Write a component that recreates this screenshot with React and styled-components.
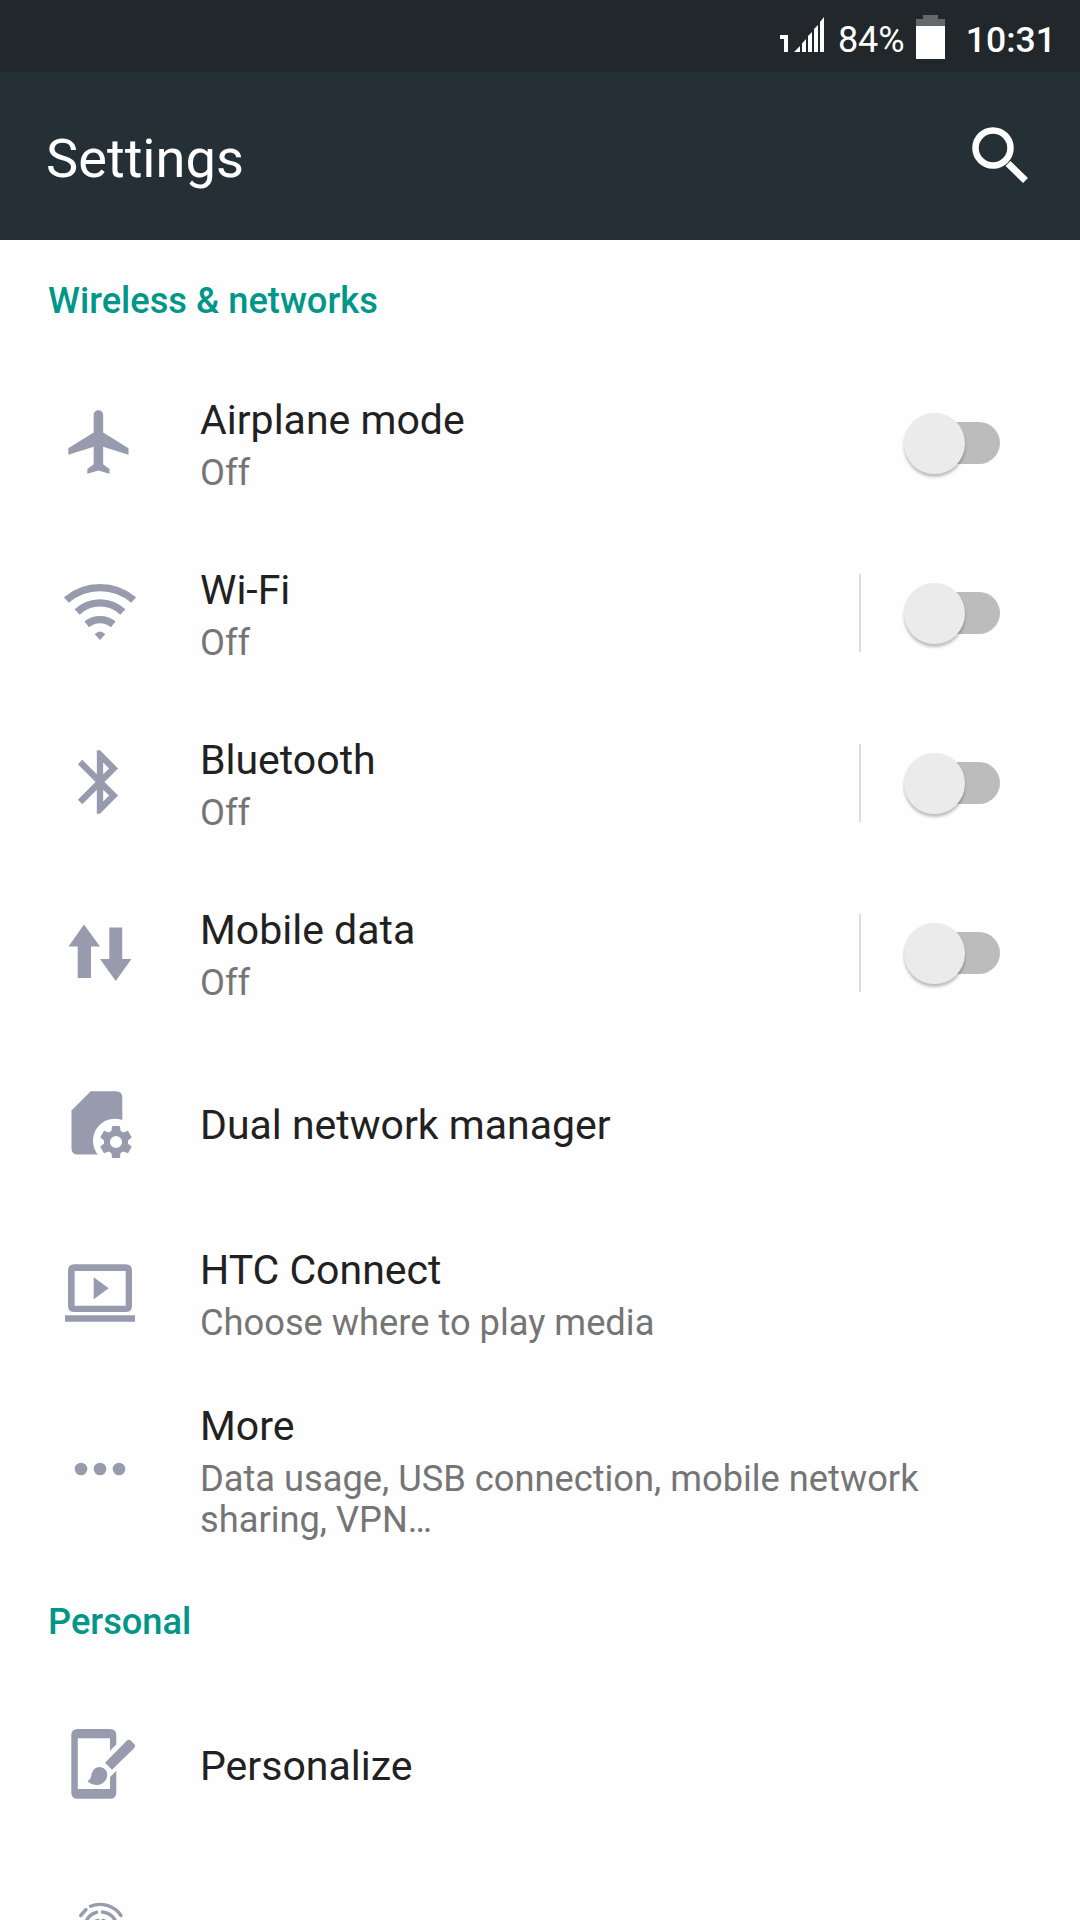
import React from 'react'
import styled, { createGlobalStyle } from 'styled-components'

const GlobalStyle = createGlobalStyle`
* {
  box-sizing: border-box;
}
body {
  margin: 0;
  background: #fefefe;
  font-family: Roboto, sans-serif;
}
`
const Screen = styled.div`
width: 1080px;
height: 1920px;
overflow: hidden;
background: #fefefe;
`
const StatusBar = styled.div`
height: 72px;
display: flex;
align-items: center;
justify-content: flex-end;
padding: 6px 24px 0 0;
background: #22272b;
color: #fff;
`
const Signal = styled.svg`
width: 44px;
height: 36px;
margin: 0 14px 8px 0;
`
const Percent = styled.span`
padding-top: 2px;
font-size: 36px;
line-height: 42px;
`
const Battery = styled.svg`
width: 29px;
height: 44px;
margin: 0 21px 4px 11px;
`
const Clock = styled.span`
padding-top: 2px;
font-size: 35.6px;
font-weight: 500;
line-height: 42px;
`
const Header = styled.header`
height: 168px;
display: flex;
align-items: center;
justify-content: space-between;
padding: 2px 51px 0 46px;
background: #253036;
`
const Title = styled.h1`
margin: 0;
padding-top: 3px;
font-size: 54.2px;
font-weight: 400;
color: #fff;
`
const SearchIcon = styled.svg`
width: 57px;
height: 57px;
margin-bottom: 4px;
`
const SectionTitle = styled.h2`
height: 118px;
margin: 0;
padding: 40px 48px 0;
font-size: 36.25px;
font-weight: 500;
line-height: 42px;
color: #009688;
`
const Row = styled.div`
height: ${({ $tall }) => ($tall ? 183 : 170)}px;
display: flex;
align-items: center;
padding: 0 80px 0 62px;
`
const RowIcon = styled.svg`
width: 76px;
height: 76px;
flex: none;
margin: 0 62px 2px 0;
fill: #979bad;
`
const Labels = styled.div`
flex: 1;
min-width: 0;
padding-top: 3px;
`
const Label = styled.div`
font-size: 41px;
line-height: 50px;
color: #212121;
`
const Summary = styled.div`
padding: 7px 0 2px;
font-size: 36.25px;
line-height: 41px;
color: #757575;
`
const Divider = styled.div`
width: 2px;
height: 78px;
margin-right: 43px;
background: #dcdcdc;
`
const Switch = styled.div`
width: 96px;
height: 42px;
display: flex;
align-items: center;
border-radius: 21px;
background: linear-gradient(to right, transparent 30px, #bcbcbc 30px);
`
const Thumb = styled.div`
width: 60.5px;
height: 60.5px;
flex: none;
margin: 0.5px 0 0 0.3px;
border-radius: 50%;
background: #ebebeb;
box-shadow: 0 3px 3px rgba(0, 0, 0, 0.25);
`

const icons = {
  airplane: (
    <path transform="scale(3.1667)" d="M21 16v-2l-8-5V3.5c0-.83-.67-1.5-1.5-1.5S10 2.67 10 3.5V9l-8 5v2l8-2.5V19l-2 1.5V22l3.5-1 3.5 1v-1.5L13 19v-5.5l8 2.5z" />
  ),
  wifi: (
    <>
      <g fill="none" stroke="#979bad" strokeWidth="7.4">
        <path d="M4.3 26A52 52 0 0 1 71.7 26" />
        <path d="M15.200 38A33 33 0 0 1 60.800 38" />
        <path d="M24.800 50.300A21 21 0 0 1 51.200 50.300" />
      </g>
      <path d="M32.700 60.300Q38 54.500 43.300 60.300L38 66z" />
    </>
  ),
  bluetooth: (
    <path transform="scale(3.1667)" d="M17.71 7.71L12 2h-1v7.59L6.41 5 5 6.41 10.59 12 5 17.59 6.41 19 11 14.41V22h1l5.71-5.71-4.3-4.29 4.3-4.29zM13 5.83l1.88 1.88L13 9.59V5.83zm1.88 10.46L13 18.17v-3.76l1.88 1.88z" />
  ),
  data: (
    <path d="M22 10.500L38 32.500H29V64H15.700V32.500H6.500zM47.300 13.500H60.200V45H69.500L53.700 67L38 45H47.300z" />
  ),
  sim: (
    <g transform="translate(0 1)">
      <path d="M28.700 6.300H54Q60.300 6.300 60.300 12.600V35A22 22 0 0 0 35.800 69.500H15.800Q9.500 69.500 9.500 63.200V25.500z" />
      <path transform="translate(34.800 37.800) scale(1.6)" d="M19.430 12.980c.04-.32.07-.64.07-.98s-.03-.66-.07-.98l2.110-1.650c.19-.15.24-.42.12-.64l-2-3.460c-.12-.22-.39-.3-.61-.22l-2.490 1c-.52-.4-1.080-.73-1.690-.98l-.38-2.650C14.460 2.180 14.250 2 14 2h-4c-.25 0-.46.18-.49.42l-.38 2.650c-.61.25-1.170.59-1.690.98l-2.490-1c-.23-.09-.49 0-.61.22l-2 3.460c-.13.22-.07.49.12.64l2.110 1.650c-.04.32-.07.65-.07.98s.03.66.07.98l-2.110 1.650c-.19.15-.24.42-.12.64l2 3.460c.12.22.39.3.61.22l2.490-1c.52.4 1.080.73 1.690.98l.38 2.650c.03.24.24.42.49.42h4c.25 0 .46-.18.49-.42l.38-2.650c.61-.25 1.170-.59 1.690-.98l2.490 1c.23.09.49 0 .61-.22l2-3.460c.12-.22.07-.49-.12-.64l-2.110-1.650zM12 15.800a3.800 3.800 0 1 1 0-7.600 3.800 3.800 0 0 1 0 7.600z" />
    </g>
  ),
  connect: (
    <>
      <path fillRule="evenodd" d="M12.300 10.300H63.700Q70 10.300 70 16.600V51.700Q70 58 63.700 58H12.300Q6 58 6 51.700V16.600Q6 10.300 12.300 10.300zM12.600 17H63.700V51.700H12.600z" />
      <path d="M31.700 23.300V45.300L46.700 34.300zM3 61.300H73V67.700H3z" />
    </>
  ),
  more: (
    <>
      <circle cx="19" cy="38" r="6.300" />
      <circle cx="38" cy="38" r="6.300" />
      <circle cx="57" cy="38" r="6.300" />
    </>
  ),
  personalize: (
    <>
      <path d="M15.600 4H48Q54.300 4 54.300 10.300V19.500L48 25.800V13.300H15.800V64H48V52L54.300 45.700V67.500Q54.300 73.800 48 73.800H15.600Q9.300 73.800 9.300 67.500V10.300Q9.300 4 15.600 4z" />
      <path d="M43 37.800L64.500 16Q66.800 13.500 69.200 16L72 18.800Q74.300 21 72 23.300L50 44.800z" />
      <path d="M25.500 56Q29 54.500 29.300 50.500C30 44.500 34 42 38 42Q45 43 45.300 50C45 56 40 60 34.500 60Q28 59.500 25.500 56z" />
    </>
  ),
  fingerprint: (
    <g fill="none" stroke="#979bad" strokeWidth="3.4" strokeLinecap="round">
      <path d="M28.500 11.300C39 7 52 10 59 20.500" />
      <path d="M18.700 20.500L24 14.500" />
      <path d="M22 34Q24 20 34.500 17.300" />
      <path d="M40.500 17Q50 18 54 27Q56 34 54 44" />
      <path d="M30 38Q30 26 36 25.500M41 25.500Q47 27 47 38" />
    </g>
  ),
}

const wireless = [
  { icon: 'airplane', label: 'Airplane mode', summary: 'Off', toggle: true },
  { icon: 'wifi', label: 'Wi-Fi', summary: 'Off', toggle: true, divider: true },
  { icon: 'bluetooth', label: 'Bluetooth', summary: 'Off', toggle: true, divider: true },
  { icon: 'data', label: 'Mobile data', summary: 'Off', toggle: true, divider: true },
  { icon: 'sim', label: 'Dual network manager' },
  { icon: 'connect', label: 'HTC Connect', summary: 'Choose where to play media' },
  { icon: 'more', label: 'More', summary: 'Data usage, USB connection, mobile network sharing, VPN…', tall: true },
]

const personal = [
  { icon: 'personalize', label: 'Personalize' },
  { icon: 'fingerprint' },
]

const SettingRow = ({ icon, label, summary, toggle, divider, tall }) => (
  <Row $tall={tall}>
    <RowIcon viewBox="0 0 76 76">{icons[icon]}</RowIcon>
    <Labels>
      {label && <Label>{label}</Label>}
      {summary && <Summary>{summary}</Summary>}
    </Labels>
    {divider && <Divider />}
    {toggle && (
      <Switch>
        <Thumb />
      </Switch>
    )}
  </Row>
)

const App = () => {
  return (
    <Screen>
      <GlobalStyle />
      <StatusBar>
        <Signal viewBox="0 0 44 36" fill="#fff">
          <path d="M0 18H8V35H4V22H0z" />
          <path d="M14 35L20 29V35zM22 26.500L26 22V35H22zM28 19L32 15V35H28zM34 12L38 8V35H34zM40 5L44 0V35H40z" />
        </Signal>
        <Percent>84%</Percent>
        <Battery viewBox="0 0 29 44">
          <path d="M7 0H22V4H29V11H0V4H7z" fill="#64686b" />
          <path d="M0 11H29V44H0z" fill="#fff" />
        </Battery>
        <Clock>10:31</Clock>
      </StatusBar>
      <Header>
        <Title>Settings</Title>
        <SearchIcon viewBox="0 0 57 57" fill="none" stroke="#fff">
          <circle cx="21" cy="21" r="17.500" strokeWidth="6.500" />
          <path d="M36 36.500L53.500 53.500" strokeWidth="7" />
        </SearchIcon>
      </Header>
      <SectionTitle>Wireless &amp; networks</SectionTitle>
      {wireless.map((item) => (
        <SettingRow key={item.icon} {...item} />
      ))}
      <SectionTitle>Personal</SectionTitle>
      {personal.map((item) => (
        <SettingRow key={item.icon} {...item} />
      ))}
    </Screen>
  )
}

export default App
